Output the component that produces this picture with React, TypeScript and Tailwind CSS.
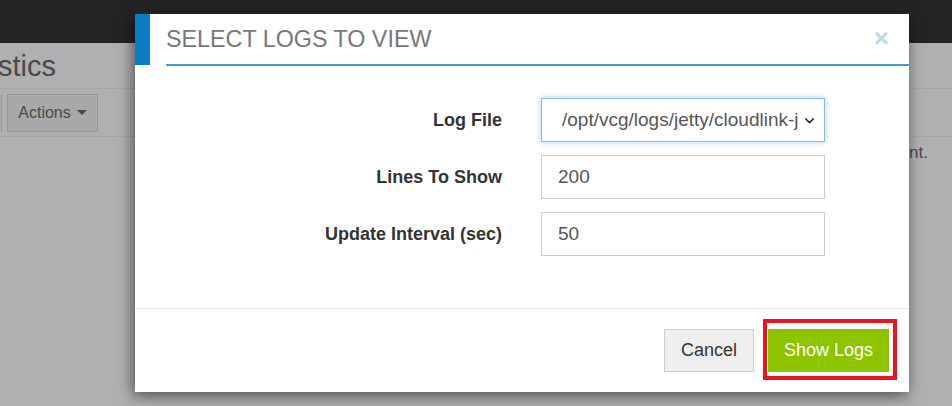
import React from "react";

const font = { fontFamily: '"Liberation Sans", Arial, sans-serif' };

export default function App() {
  return (
    <div
      className="relative w-[952px] h-[406px] overflow-hidden bg-[#b0afb1] font-['Liberation_Sans',Arial,sans-serif]"
      style={font}
    >
      {/* top dark bar */}
      <div className="h-[43px] bg-[#242325]" />
      {/* page behind */}
      <div className="h-[45px] flex items-center">
        <span className="-ml-[2px] text-[29px] leading-none text-[#4a494b] mt-[2px]">stics</span>
      </div>
      <div className="h-[49px] border-t border-b border-[#a6a5a7] flex items-center">
        <div className="w-[2px] h-[38px] border-r border-[#959496]" />
        <div className="ml-[5px] w-[91px] h-[38px] border border-[#959496] bg-[#a9a8aa] flex items-center justify-center gap-[6px] text-[16px] text-[#4a494b]">
          Actions
          <span className="w-0 h-0 border-l-[5px] border-r-[5px] border-t-[5px] border-l-transparent border-r-transparent border-t-[#4a494b]" />
        </div>
      </div>
      <div className="flex justify-end pr-[24px] pt-[3px] text-[17px] text-[#4a494b]">nt.</div>

      {/* modal */}
      <div className="absolute left-[135px] top-[14px] w-[774px] h-[378px] bg-white flex flex-col shadow-[-2px_4px_14px_rgba(0,0,0,0.55)]">
        <div className="flex h-[52px]">
          <div className="w-[15px] h-[51px] bg-[#0b7dc3]" />
          <div className="flex-1 ml-[16px] border-b-2 border-[#3d9fc3] flex items-center justify-between">
            <span className="text-[23.3px] text-[#777777] leading-none mt-[1px]">SELECT LOGS TO VIEW</span>
            <span className="mr-[20px] text-[26px] font-bold leading-none text-[#bcd8e4] -mt-[2px]">×</span>
          </div>
        </div>
        <div className="flex-1 pt-[32px]">
          <div className="grid grid-cols-[367px_284px] gap-x-[39px] gap-y-[13px] items-center">
            <div className="text-right text-[18px] font-bold text-[#333333]">Log File</div>
            <div className="h-[44px] border border-[#86bde6] shadow-[0_0_6px_rgba(102,175,233,0.6)] flex items-center pl-[20px] pr-[8px] text-[19px] text-[#555555]">
              <span className="w-[236px] overflow-hidden whitespace-nowrap">/opt/vcg/logs/jetty/cloudlink-jetty.log</span>
              <svg className="ml-auto" width="13" height="13" viewBox="0 0 24 24" fill="none" stroke="#333" strokeWidth="3" strokeLinecap="round" strokeLinejoin="round">
                <path d="M5 9l7 7 7-7" />
              </svg>
            </div>
            <div className="text-right text-[18px] font-bold text-[#333333]">Lines To Show</div>
            <div className="h-[44px] border border-[#cccccc] flex items-center pl-[16px] text-[19px] text-[#555555]">200</div>
            <div className="text-right text-[18px] font-bold text-[#333333]">Update Interval (sec)</div>
            <div className="h-[44px] border border-[#cccccc] flex items-center pl-[16px] text-[19px] text-[#555555]">50</div>
          </div>
        </div>
        <div className="h-[84px] border-t border-[#e5e5e5] pt-[20px] pr-[20px] flex justify-end items-start gap-[14px]">
          <div className="w-[90px] h-[43px] border border-[#cccccc] bg-[#efefef] flex items-center justify-center text-[18px] text-[#333333]">Cancel</div>
          <div className="w-[121px] h-[43px] bg-[#8cc400] flex items-center justify-center text-[18px] text-white">Show Logs</div>
        </div>
      </div>

      {/* red annotation box */}
      <div className="absolute left-[763px] top-[319px] w-[134px] h-[61px] border-4 border-[#e8141f]" />
    </div>
  );
}
